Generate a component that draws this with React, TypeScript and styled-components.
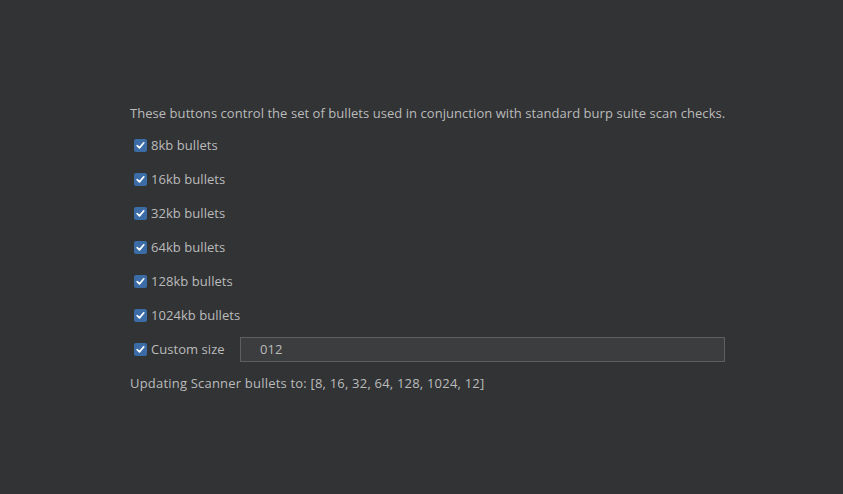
import React from 'react';
import styled, { createGlobalStyle } from 'styled-components';

const GlobalStyle = createGlobalStyle`
  html, body {
    margin: 0;
    padding: 0;
    background: #313335;
  }
`;

const Page = styled.div`
  width: 843px;
  height: 494px;
  background: #313335;
  color: #bbbbbb;
  font-family: 'Open Sans', 'Noto Sans', sans-serif;
  font-size: 13px;
  letter-spacing: 0.05px;
  padding: 104px 0 0 130px;
  box-sizing: border-box;
`;

const Description = styled.div`
  height: 18px;
  line-height: 18px;
  margin-bottom: 6px;
`;

const Row = styled.label`
  display: flex;
  align-items: center;
  height: 34px;
  padding-left: 4px;
`;

const Box = styled.span`
  width: 13px;
  height: 13px;
  border-radius: 2px;
  background: #3c6ca6;
  display: flex;
  align-items: center;
  justify-content: center;
  margin-right: 4px;
`;

const Label = styled.span<{ $width?: number }>`
  width: ${({ $width }) => ($width ? `${$width}px` : 'auto')};
  white-space: nowrap;
`;

const Field = styled.div`
  width: 485px;
  height: 25px;
  box-sizing: border-box;
  border: 1px solid #5e6060;
  background: #3b3d3f;
  display: flex;
  align-items: center;
  padding-left: 19px;
  color: #bbbbbb;
`;

const Status = styled.div`
  height: 34px;
  line-height: 34px;
  letter-spacing: 0.2px;
`;

const Check = () => (
  <Box>
    <svg width="11" height="11" viewBox="0 0 11 11">
      <path d="M2.2 5.6 L4.5 7.9 L8.8 2.8" fill="none" stroke="#ffffff" strokeWidth="1.7" strokeLinecap="round" strokeLinejoin="round" />
    </svg>
  </Box>
);

const sizes = ['8kb', '16kb', '32kb', '64kb', '128kb', '1024kb'];

export default function App() {
  return (
    <>
      <GlobalStyle />
      <Page>
        <Description>These buttons control the set of bullets used in conjunction with standard burp suite scan checks.</Description>
        {sizes.map((s) => (
          <Row key={s}>
            <Check />
            <Label>{s} bullets</Label>
          </Row>
        ))}
        <Row>
          <Check />
          <Label $width={89}>Custom size</Label>
          <Field>012</Field>
        </Row>
        <Status>Updating Scanner bullets to: [8, 16, 32, 64, 128, 1024, 12]</Status>
      </Page>
    </>
  );
}
